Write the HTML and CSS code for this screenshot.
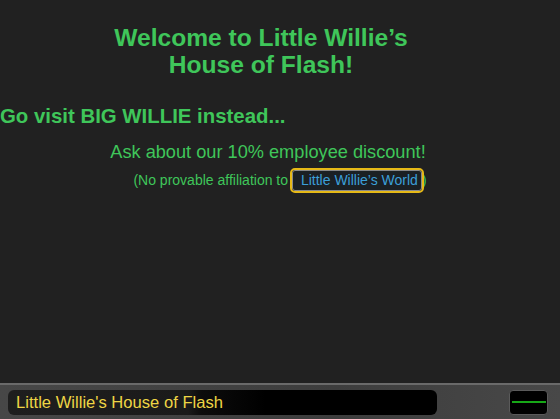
FILE: index.html
```html
<!DOCTYPE html>
<html>
<head>
    <link rel="stylesheet" href="styles.css">
    <title>Little Willie's House of Flash</title>
</head>

<body>
    <div class="page">
        <h1 class="welcome">Welcome to Little Willie’s<br>House of Flash!</h1>
        <h2 class="visit">Go visit BIG WILLIE instead...</h2>
        <p class="discount">Ask about our 10% employee discount!</p>
        <p class="affiliation">(No provable affiliation to <a href="#" class="world">Little Willie’s World</a>)</p>
    </div>

    <div class="statusbar">
        <div class="title-field">Little Willie's House of Flash</div>
        <div class="meter"><span class="meter-line"></span></div>
    </div>
</body>
</html>
```

FILE: styles.css
```css
html, body {
    height: 100%;
}
body {
    margin: 0;
    background-color: #212121;
    font-family: 'Liberation Sans', Arial, sans-serif;
    color: #3fc65a;
    display: flex;
    flex-direction: column;
    overflow: hidden;
}
.page {
    flex: 1;
    padding-top: 24px;
}
.welcome {
    margin: 0;
    padding-right: 38px;
    font-size: 24.6px;
    line-height: 27px;
    text-align: center;
}
.visit {
    margin: 26px 0 0 0;
    font-size: 20.4px;
    line-height: 24px;
}
.discount {
    margin: 13px 0 0 0;
    padding-right: 24px;
    font-size: 18.2px;
    line-height: 22px;
    text-align: center;
}
.affiliation {
    margin: 7px 0 0 0;
    font-size: 14px;
    line-height: 20px;
    text-align: center;
}
.world {
    color: #3b9fd8;
    text-decoration: none;
    background-color: #1b2024;
    padding: 1px 3px 2px 8px;
    border: 1px solid #8a8a8a;
    border-radius: 3px;
    outline: 2px solid #e6b917;
    outline-offset: 0;
}
.statusbar {
    height: 34px;
    border-top: 2px solid #6a6a6a;
    background: linear-gradient(to right, #474747, #3d3d3d 60%, #484848);
    display: flex;
    align-items: center;
    padding: 0 12px 0 8px;
}
.title-field {
    width: 421px;
    height: 25px;
    padding-left: 8px;
    border-radius: 6px;
    background: linear-gradient(to right, #1e1e1e, #1a1a1a 42%, #0c0c0c 45%, #000 60%);
    color: #eed545;
    font-size: 16.6px;
    line-height: 25px;
}
.meter {
    margin-left: auto;
    width: 37px;
    height: 23px;
    border: 1px solid #5a5a5a;
    border-radius: 4px;
    background-color: #000;
    display: flex;
    align-items: center;
    justify-content: center;
}
.meter-line {
    width: 34px;
    height: 2px;
    background-color: #17a817;
}
```
